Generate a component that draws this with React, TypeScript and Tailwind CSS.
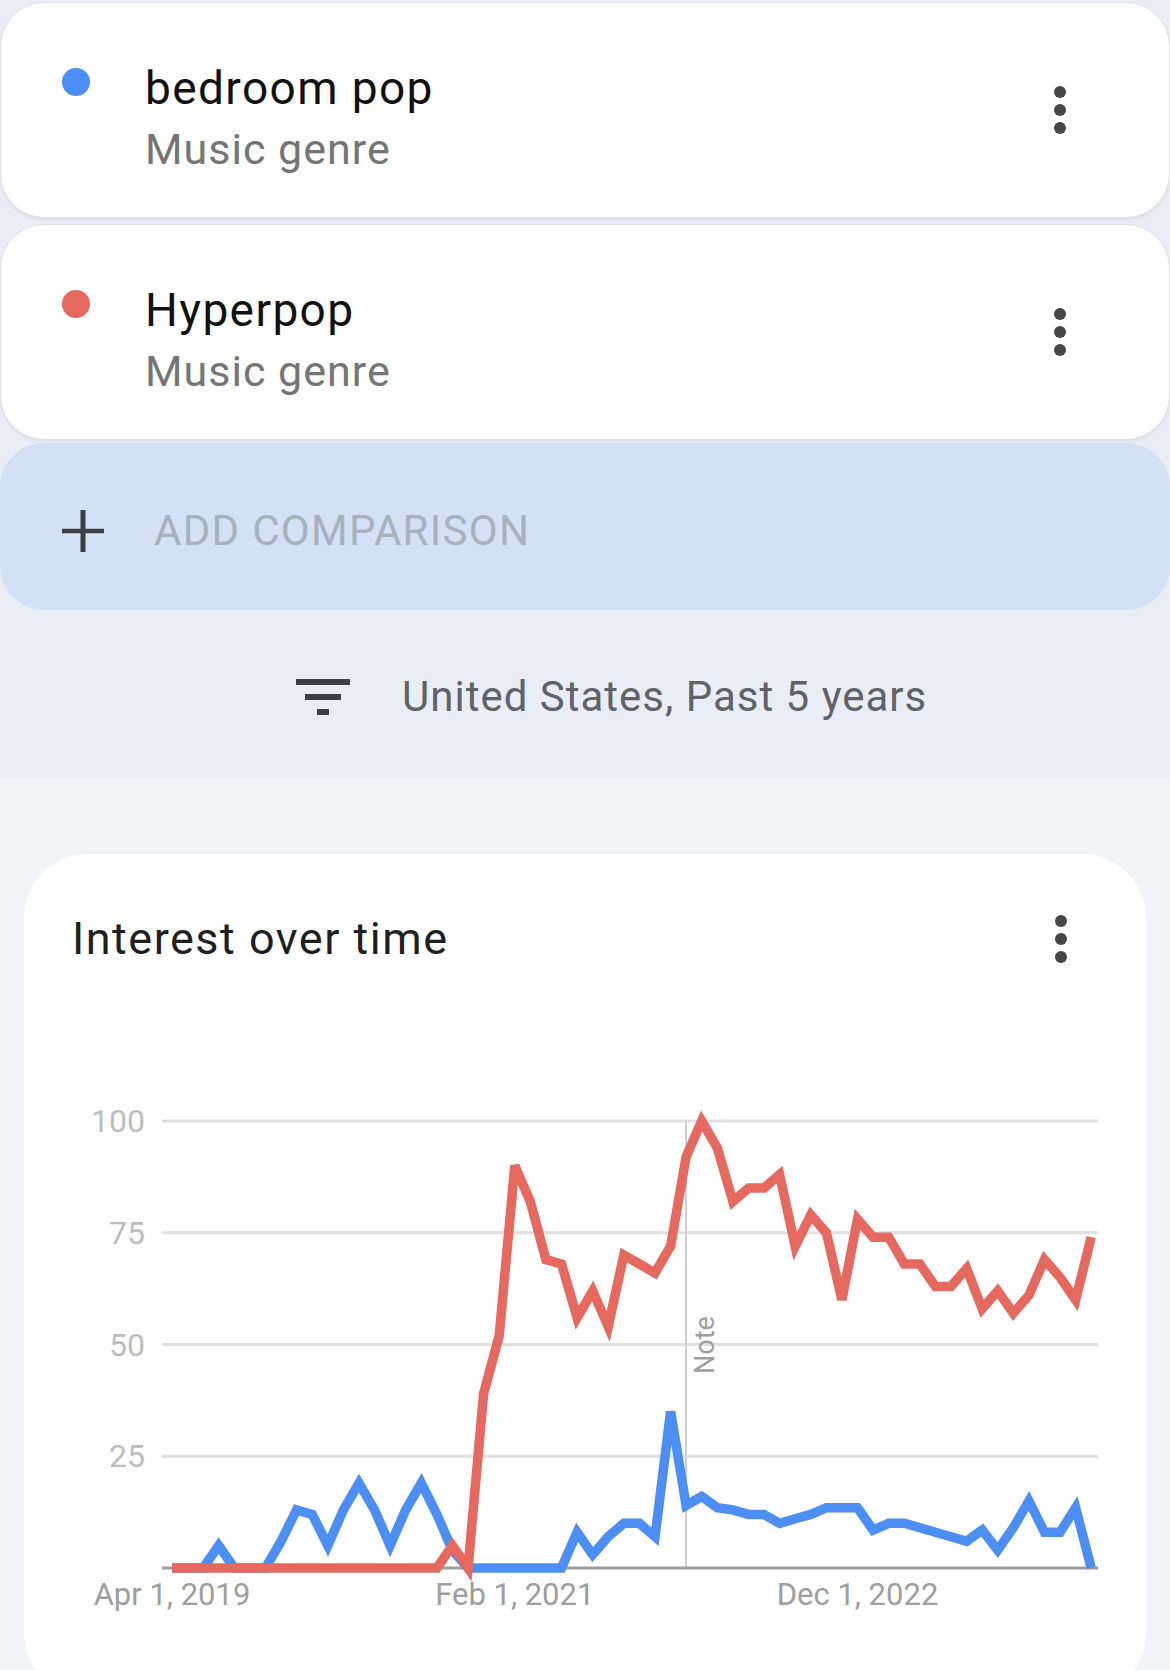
import React from 'react';

const red = [
  0, 0, 0, 0, 0, 0, 0, 0, 0, 0, 0, 0, 0, 0, 0, 0, 0, 0, 5, 0,
  39, 52, 90, 82, 69, 68, 56, 62, 54, 70, 68, 66, 72, 92, 100, 94, 82, 85, 85, 88,
  72, 79, 75, 60, 78, 74, 74, 68, 68, 63, 63, 67, 58, 62, 57, 61, 69, 65, 60, 74,
];

const blue = [
  0, 0, 0, 5, 0, 0, 0, 6, 13, 12, 5, 13, 19, 13, 5, 13, 19, 12, 4, 0,
  0, 0, 0, 0, 0, 0, 8, 3, 7, 10, 10, 7, 35, 14, 16, 13.5, 13, 12, 12, 10,
  11, 12, 13.5, 13.5, 13.5, 8.5, 10, 10, 9, 8, 7, 6, 8.5, 4, 9, 15, 8, 8, 13.5, 0,
];

const x0 = 148;
const step = 15.58;
const yZero = 544;
const yScale = 4.47;

function toPoints(data: number[]) {
  return data.map((v, i) => `${(x0 + i * step).toFixed(1)},${(yZero - v * yScale).toFixed(1)}`).join(' ');
}

function Kebab() {
  return (
    <div className="flex flex-col gap-[6px]">
      <div className="w-[12px] h-[12px] rounded-full bg-[#444746]" />
      <div className="w-[12px] h-[12px] rounded-full bg-[#444746]" />
      <div className="w-[12px] h-[12px] rounded-full bg-[#444746]" />
    </div>
  );
}

function TermCard({ name, color }: { name: string; color: string }) {
  return (
    <div className="h-[216px] bg-white rounded-[44px] border border-[#dfe1e5] shadow-[0_2px_3px_rgba(0,0,0,0.06)] flex items-start pl-[61px] pr-[103px]">
      <div className="w-[28px] h-[28px] rounded-full mt-[65px] shrink-0" style={{ backgroundColor: color }} />
      <div className="flex-1 pl-[55px] pt-[55px]">
        <div className="text-[46px] leading-[60px] tracking-[1.4px] text-[#111]">{name}</div>
        <div className="text-[43px] leading-[62px] tracking-[1px] text-[#757575]">Music genre</div>
      </div>
      <div className="self-center">
        <Kebab />
      </div>
    </div>
  );
}

function Chart() {
  const grid = [100, 75, 50, 25];
  return (
    <svg width={1122} height={673} viewBox="0 0 1122 673" className="block">
      {grid.map((g) => (
        <g key={g}>
          <line x1={138} x2={1074} y1={yZero - g * yScale} y2={yZero - g * yScale} stroke="#e0e0e0" strokeWidth={3} />
          <text x={121} y={yZero - g * yScale} textAnchor="end" dominantBaseline="central" fontSize={32} fill="#bdbdbd">
            {g}
          </text>
        </g>
      ))}
      <line x1={662} x2={662} y1={yZero - 100 * yScale} y2={yZero} stroke="#cfcfcf" strokeWidth={2} />
      <text
        x={681}
        y={321}
        fontSize={27}
        fill="#9e9e9e"
        textAnchor="middle"
        dominantBaseline="central"
        transform="rotate(-90 681 321)"
      >
        Note
      </text>
      <line x1={138} x2={1074} y1={yZero} y2={yZero} stroke="#9e9e9e" strokeWidth={3} />
      <polyline points={toPoints(blue)} fill="none" stroke="#4d8ef5" strokeWidth={9.5} strokeLinejoin="miter" />
      <polyline points={toPoints(red)} fill="none" stroke="#e5695f" strokeWidth={9.5} strokeLinejoin="miter" />
      <text x={x0} y={570} textAnchor="middle" dominantBaseline="central" fontSize={31} fill="#9e9e9e">
        Apr 1, 2019
      </text>
      <text x={x0 + 22 * step} y={570} textAnchor="middle" dominantBaseline="central" fontSize={31} fill="#9e9e9e">
        Feb 1, 2021
      </text>
      <text x={x0 + 44 * step} y={570} textAnchor="middle" dominantBaseline="central" fontSize={31} fill="#9e9e9e">
        Dec 1, 2022
      </text>
    </svg>
  );
}

export default function App() {
  return (
    <div className="w-[1170px] h-[1670px] overflow-hidden bg-[#f0f4f9] font-['Roboto',sans-serif]">
      <div className="bg-[#e9eef6] pt-[2px]">
        <TermCard name="bedroom pop" color="#4d8ef5" />
        <div className="h-[6px]" />
        <TermCard name="Hyperpop" color="#e5695f" />
        <div className="h-[3px]" />
        <div className="h-[167px] bg-[#d3e0f5] rounded-[44px] flex items-center pl-[62px] pt-[8px]">
          <svg width={42} height={42} viewBox="0 0 42 42" className="shrink-0">
            <line x1={21} y1={0} x2={21} y2={42} stroke="#3c4043" strokeWidth={5} />
            <line x1={0} y1={21} x2={42} y2={21} stroke="#3c4043" strokeWidth={4.5} />
          </svg>
          <span className="ml-[50px] text-[42px] text-[#a7b0bd] tracking-[1.3px]">ADD COMPARISON</span>
        </div>
        <div className="h-[167px] flex items-center pl-[296px] pt-[6px]">
          <svg width={54} height={36} viewBox="3 6 18 12" className="shrink-0">
            <path d="M10 18h4v-2h-4v2zM3 6v2h18V6H3zm3 7h12v-2H6v2z" fill="#3c4043" />
          </svg>
          <span className="ml-[52px] text-[42px] tracking-[1px] text-[#5f6368]">United States, Past 5 years</span>
        </div>
      </div>
      <div className="pt-[77px] px-[24px]">
        <div className="h-[843px] bg-white rounded-[64px]">
          <div className="h-[170px] flex items-center justify-between pl-[48px] pr-[79px]">
            <span className="text-[45px] tracking-[1.5px] text-[#1f1f1f]">Interest over time</span>
            <Kebab />
          </div>
          <Chart />
        </div>
      </div>
    </div>
  );
}
